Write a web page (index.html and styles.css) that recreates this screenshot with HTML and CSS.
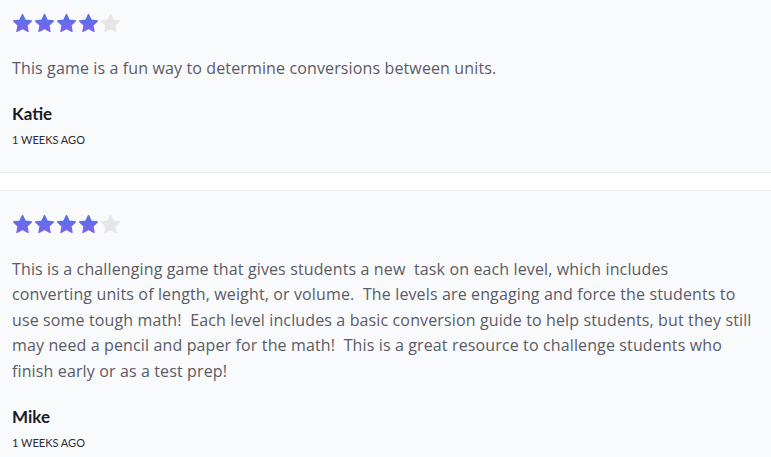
FILE: index.html
```html
<!DOCTYPE html>
<html lang="en">
<head>
    <meta charset="UTF-8">
    <meta name="viewport" content="width=device-width, initial-scale=1.0">
    <title>Reviews</title>
    <link rel="stylesheet" href="styles.css">
</head>
<body>
  <svg width="0" height="0" class="defs">
    <defs>
      <linearGradient id="star-fill" x1="0" y1="0" x2="0" y2="1">
        <stop offset="0" stop-color="#4f73e3"/>
        <stop offset="1" stop-color="#7e63f0"/>
      </linearGradient>
      <symbol id="star" viewBox="0 0 24 24">
        <path d="M12 1.8l3.1 6.5 7 .9-5.1 4.9 1.3 7-6.3-3.4-6.3 3.4 1.3-7L1.9 9.2l7-.9z" stroke-linejoin="round" stroke-width="1.6"/>
      </symbol>
    </defs>
  </svg>

  <div class="review-list">
    <div class="review">
      <div class="stars">
        <svg class="star on"><use href="#star"/></svg>
        <svg class="star on"><use href="#star"/></svg>
        <svg class="star on"><use href="#star"/></svg>
        <svg class="star on"><use href="#star"/></svg>
        <svg class="star off"><use href="#star"/></svg>
      </div>
      <p class="review-text">This game is a fun way to determine conversions between units.</p>
      <div class="reviewer">Katie</div>
      <div class="review-date">1 weeks ago</div>
    </div>

    <div class="review">
      <div class="stars">
        <svg class="star on"><use href="#star"/></svg>
        <svg class="star on"><use href="#star"/></svg>
        <svg class="star on"><use href="#star"/></svg>
        <svg class="star on"><use href="#star"/></svg>
        <svg class="star off"><use href="#star"/></svg>
      </div>
      <p class="review-text">This is a challenging game that gives students a new&nbsp; task on each level, which includes<br>
        converting units of length, weight, or volume.&nbsp; The levels are engaging and force the students to<br>
        use some tough math!&nbsp; Each level includes a basic conversion guide to help students, but they still<br>
        may need a pencil and paper for the math!&nbsp; This is a great resource to challenge students who<br>
        finish early or as a test prep!</p>
      <div class="reviewer">Mike</div>
      <div class="review-date">1 weeks ago</div>
    </div>
  </div>
</body>
</html>
```

FILE: styles.css
```css
body {
  margin: 0;
  background: #ffffff;
  font-family: "Open Sans", sans-serif;
}

.defs {
  position: absolute;
}

.review-list {
  display: flex;
  flex-direction: column;
  gap: 17px;
  margin-top: -11px;
}

.review {
  background: #f9fafc;
  border-top: 1px solid #ebebeb;
  border-bottom: 1px solid #ebebeb;
  padding: 23px 6px 25px 12px;
}

.stars {
  display: flex;
  gap: 1px;
  height: 22px;
}

.star {
  width: 21px;
  height: 21px;
}

.star.on {
  fill: url(#star-fill);
  stroke: url(#star-fill);
}

.star.off {
  fill: #e6e6e6;
  stroke: #e6e6e6;
}

.review-text {
  margin: 21px 0 0;
  font-size: 16px;
  letter-spacing: 0.13px;
  line-height: 25.6px;
  color: #5b5b66;
  white-space: nowrap;
}

.reviewer {
  margin-top: 21px;
  font-family: Lato, sans-serif;
  font-size: 17px;
  font-weight: 700;
  line-height: 22px;
  color: #1b1b26;
}

.review-date {
  margin-top: 8px;
  font-family: Lato, sans-serif;
  font-size: 11px;
  line-height: 14px;
  text-transform: uppercase;
  color: #2b2b36;
}
```
